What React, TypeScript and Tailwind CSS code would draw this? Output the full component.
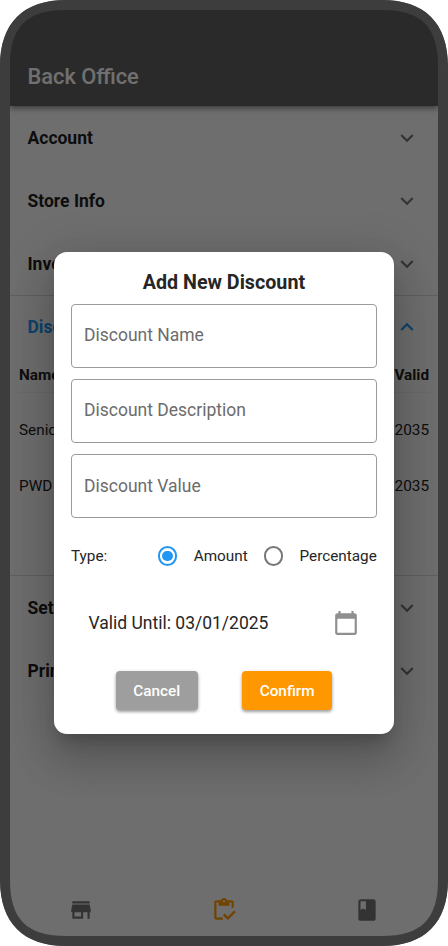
import type { ReactNode } from "react";
import { MdExpandMore, MdExpandLess, MdStore, MdBook, MdCalendarToday } from "react-icons/md";

function Section({ title, open = false }: { title: string; open?: boolean }) {
  return (
    <div className={`flex h-[63px] shrink-0 items-center justify-between pl-[17.5px] pr-[18px] ${open ? "-mt-px text-[#2196f3]" : "text-[#1f1f1f]"}`}>
      <span className="pt-px text-[17.5px] font-bold">{title}</span>
      {open ? <MdExpandLess size={26} /> : <MdExpandMore size={26} className="text-[#757575]" />}
    </div>
  );
}

function Row({ name, valid }: { name: string; valid: string }) {
  return (
    <div className="flex h-[56px] items-center justify-between">
      <span>{name}</span>
      <span>{valid}</span>
    </div>
  );
}

function Field({ label }: { label: string }) {
  return (
    <div className="flex h-[64px] items-center rounded-[4px] border border-[#9b9b9b] pb-px pl-3 text-[17.5px] text-[#6c6c6c]">
      {label}
    </div>
  );
}

function Button({ className, children }: { className: string; children: ReactNode }) {
  return (
    <button className={`h-[39px] rounded-[4px] pt-px text-[15.3px] font-medium text-white shadow-[0_2px_3px_rgba(0,0,0,0.3),0_1px_4px_rgba(0,0,0,0.14)] ${className}`}>
      {children}
    </button>
  );
}

function ClipboardCheck() {
  return (
    <svg width="26" height="26" viewBox="0 0 24 24" fill="#ff9800" fillRule="evenodd">
      <path d="M5 5h2v3h10V5h2v5h2V5c0-1.1-.9-2-2-2h-4.18C14.4 1.84 13.3 1 12 1s-2.4.84-2.82 2H5c-1.1 0-2 .9-2 2v14c0 1.1.9 2 2 2h6v-2H5V5zm7-2c.55 0 1 .45 1 1s-.45 1-1 1-1-.45-1-1 .45-1 1-1z" />
      <path d="M21.25 12.5 15.51 18.25 12.5 15.25 11 16.75 15.51 21.25 22.75 14z" />
    </svg>
  );
}

export default function App() {
  return (
    <div className="relative h-[946px] w-[448px] overflow-hidden bg-white font-[Roboto,sans-serif]">
      <div className="flex h-full flex-col px-[10px] pt-[10px] pb-[10px]">
        <div className="relative flex h-[95.5px] shrink-0 items-end bg-[#616161] pb-[14px] pl-[17.5px] text-[21.8px] font-medium leading-[30px] text-white shadow-[0_2px_6px_rgba(0,0,0,0.5)]">
          Back Office
        </div>
        <div className="flex grow flex-col bg-[#fafafa] pt-[0.5px]">
          <Section title="Account" />
          <Section title="Store Info" />
          <Section title="Inventory" />
          <div className="flex h-[281px] shrink-0 flex-col border-y border-[#d8d8d8]">
            <Section title="Discounts" open />
            <div className="mx-[9px] text-[15.3px] text-[#222]">
              <div className="mt-px flex h-[34px] items-center justify-between border-b border-[#eee] font-bold">
                <span>Name</span>
                <span>Valid</span>
              </div>
              <div className="h-[9px]" />
              <Row name="Senior" valid="2035" />
              <Row name="PWD" valid="2035" />
            </div>
          </div>
          <Section title="Settings" />
          <Section title="Printer" />
          <div className="grow" />
          <div className="flex h-[57px] items-center justify-around border-t border-[#f5f5f5] pt-[4px] text-[#757575]">
            <MdStore size={26} />
            <ClipboardCheck />
            <MdBook size={26} />
          </div>
        </div>
      </div>

      <div className="absolute inset-0 bg-black/56" />

      <div className="absolute top-[252.4px] left-[53.6px] flex h-[481.6px] w-[340.6px] flex-col rounded-[13px] bg-white px-[17.4px] text-[#262626] shadow-[0_12px_16px_-7px_rgba(0,0,0,0.2),0_26px_41px_3px_rgba(0,0,0,0.14),0_10px_49px_9px_rgba(0,0,0,0.12)]">
        <h2 className="mt-[15.2px] h-[36px] text-center text-[19.7px] font-bold leading-[29px]">Add New Discount</h2>
        <div className="flex flex-col gap-[11.3px]">
          <Field label="Discount Name" />
          <Field label="Discount Description" />
          <Field label="Discount Value" />
        </div>
        <div className="mt-[12px] flex h-[52px] items-center text-[15.3px]">
          <span className="w-[87px]">Type:</span>
          <span className="flex size-[19.5px] items-center justify-center rounded-full border-[2px] border-[#2196f3]">
            <span className="size-[10.5px] rounded-full bg-[#2196f3]" />
          </span>
          <span className="ml-[16.5px] w-[70px]">Amount</span>
          <span className="size-[19.5px] rounded-full border-[2px] border-[#757575]" />
          <span className="ml-[16.5px] whitespace-nowrap">Percentage</span>
        </div>
        <div className="mt-[11px] flex h-[60px] items-center justify-between pl-[17.5px] pr-[18px]">
          <span className="text-[17.5px]">Valid Until: 03/01/2025</span>
          <MdCalendarToday size={26} className="text-[#8f8f8f]" />
        </div>
        <div className="mt-[18px] flex justify-center gap-[44.5px]">
          <Button className="w-[82px] bg-[#9e9e9e]">Cancel</Button>
          <Button className="w-[90px] bg-[#ff9800]">Confirm</Button>
        </div>
      </div>

      <svg className="pointer-events-none absolute inset-0" width="448" height="946" viewBox="0 0 448 946">
        <path fill="#fff" fillRule="evenodd" d="M0 0H448V946H0Z M66 0H382C424.700 0 448 23.300 448 66V880C448 922.700 424.700 946 382 946H66C23.300 946 0 922.700 0 880V66C0 23.300 23.300 0 66 0Z" />
        <path fill="#3d3d3d" fillRule="evenodd" d="M66 0H382C424.700 0 448 23.300 448 66V880C448 922.700 424.700 946 382 946H66C23.300 946 0 922.700 0 880V66C0 23.300 23.300 0 66 0Z M66 10C26.800 10 10 26.800 10 66V880C10 919.200 26.800 936 66 936H382C421.200 936 438 919.200 438 880V66C438 26.800 421.200 10 382 10Z" />
      </svg>
    </div>
  );
}
